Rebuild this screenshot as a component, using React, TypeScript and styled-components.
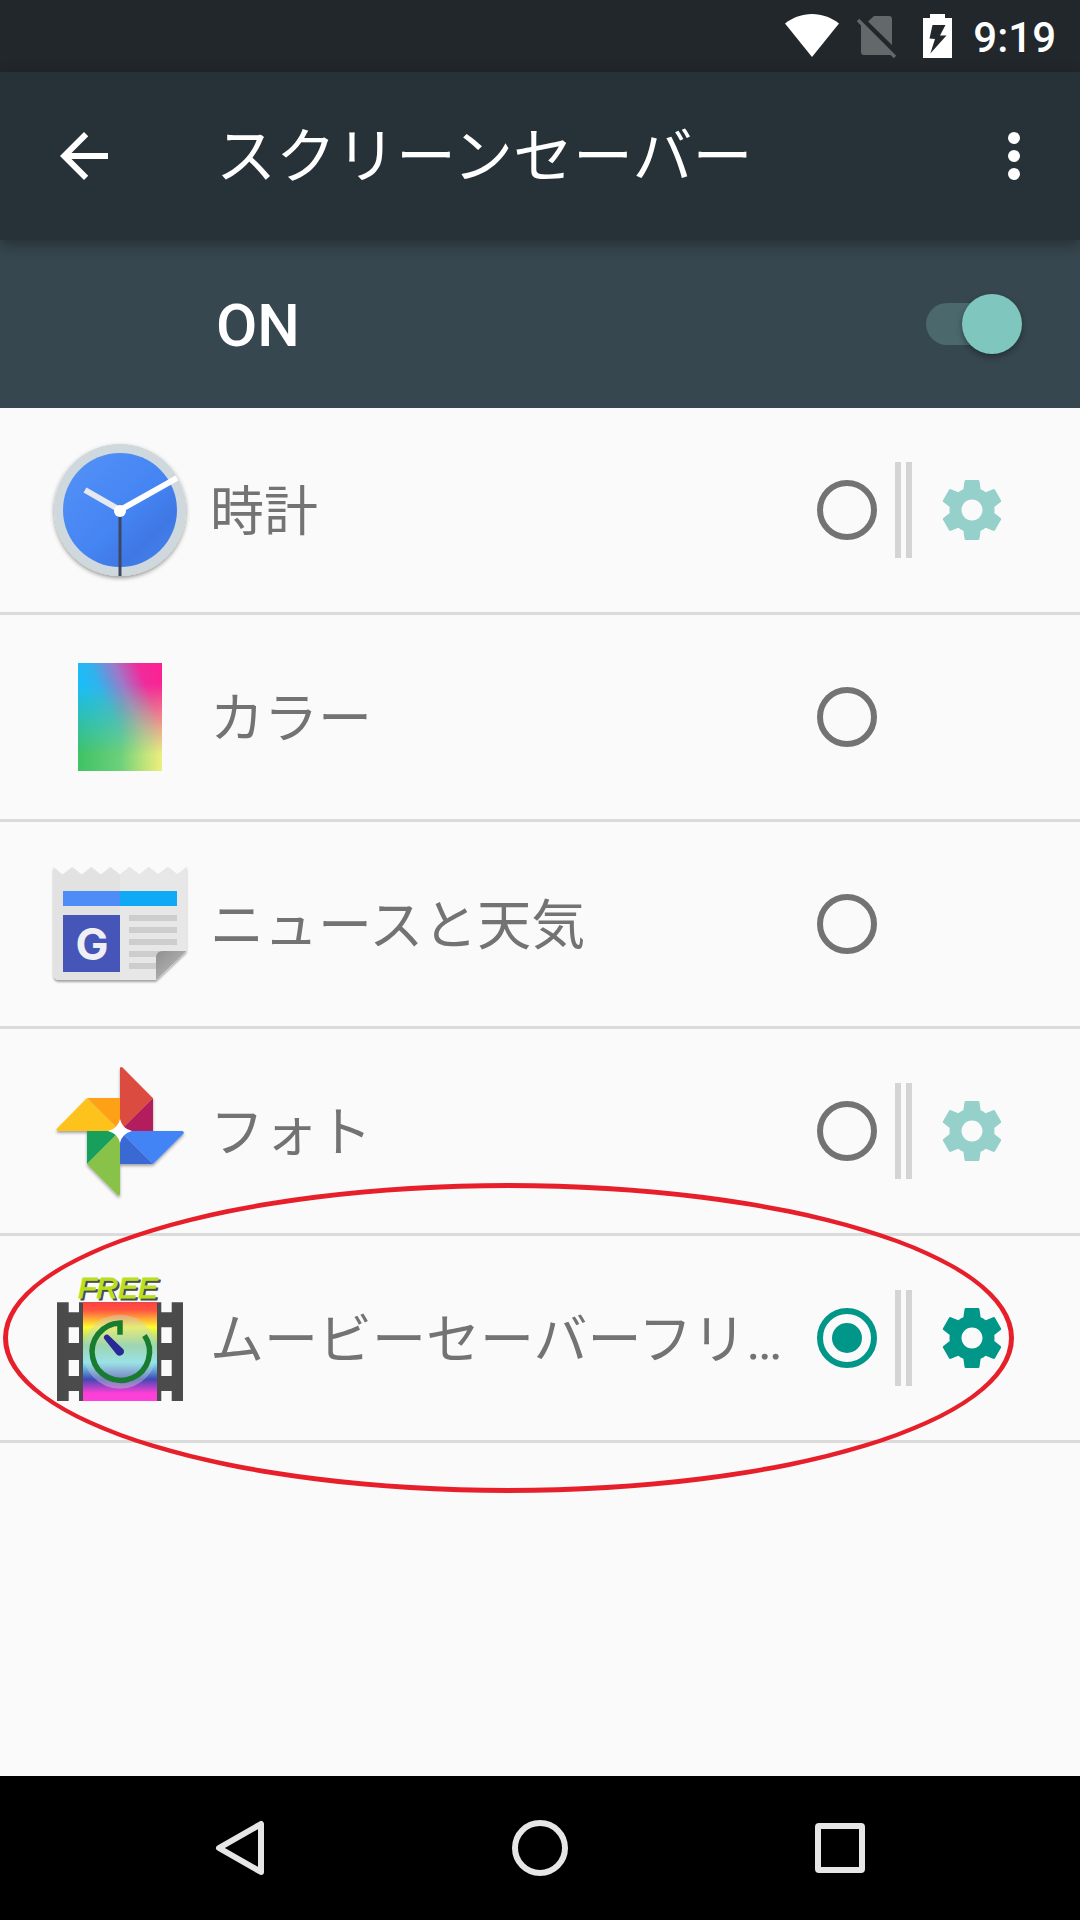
import React, { useState } from "react";
import styled, { createGlobalStyle } from "styled-components";

const GlobalStyle = createGlobalStyle`
  *, *::before, *::after { box-sizing: border-box; }
  body {
    margin: 0;
    background: #fafafa;
    font-family: Roboto, "Noto Sans CJK JP", sans-serif;
  }
`;

const Screen = styled.div`
  display: flex;
  flex-direction: column;
  min-height: 100vh;
`;

const StatusBar = styled.div`
  display: flex;
  align-items: center;
  justify-content: flex-end;
  gap: 18px;
  height: 72px;
  padding-right: 24px;
  background: #21272b;
  color: #fff;
`;

const StatusSlot = styled.span<{ $width: number }>`
  display: flex;
  width: ${(p) => p.$width}px;
`;

const Clock = styled.time`
  padding-top: 4px;
  font-size: 42px;
  font-weight: 500;
  line-height: 48px;
`;

const AppBar = styled.header`
  position: relative;
  display: flex;
  align-items: center;
  gap: 96px;
  height: 168px;
  padding: 0 30px 0 48px;
  background: #263238;
  color: #fff;
  box-shadow: 0 5px 14px rgba(0, 0, 0, 0.32);
`;

const IconButton = styled.button`
  display: flex;
  flex: none;
  padding: 0;
  border: 0;
  background: none;
  color: inherit;
  cursor: pointer;
`;

const Title = styled.h1`
  flex: 1;
  margin: 0;
  padding-top: 4px;
  font-size: 60px;
  font-weight: 400;
  line-height: 72px;
  white-space: nowrap;
`;

const SwitchBar = styled.div`
  display: flex;
  align-items: center;
  justify-content: space-between;
  height: 168px;
  padding: 0 58px 0 216px;
  background: #37474f;
  color: #fff;
`;

const SwitchLabel = styled.label`
  padding-top: 4px;
  font-size: 60px;
  font-weight: 500;
  line-height: 72px;
`;

const Toggle = styled.input`
  position: relative;
  appearance: none;
  width: 96px;
  height: 60px;
  margin: 0;
  cursor: pointer;

  &::before {
    content: "";
    position: absolute;
    inset: 9px 6px 9px 0;
    border-radius: 21px;
    background: #4b696d;
  }

  &::after {
    content: "";
    position: absolute;
    top: 0;
    left: 0;
    width: 60px;
    height: 60px;
    border-radius: 50%;
    background: #b9b9b9;
    box-shadow: 0 3px 6px rgba(0, 0, 0, 0.35);
  }

  &:checked::after {
    left: 36px;
    background: #7fc6bf;
  }
`;

const List = styled.ul`
  flex: 1;
  margin: 0;
  padding: 0;
  list-style: none;
  background: #fafafa;
`;

const Row = styled.li`
  position: relative;
  display: flex;
  align-items: center;
  gap: 18px;
  height: 207px;
  padding-left: 48px;
  border-bottom: 3px solid #dbdbdb;
`;

const RowIcon = styled.svg`
  flex: none;
  width: 144px;
  height: 144px;
`;

const RowLabel = styled.label`
  flex: 1;
  min-width: 0;
  padding-top: 6px;
  overflow: hidden;
  color: #737373;
  font-size: 54px;
  line-height: 78px;
  text-overflow: ellipsis;
  white-space: nowrap;
`;

const Radio = styled.input`
  appearance: none;
  display: grid;
  place-items: center;
  flex: none;
  width: 60px;
  height: 60px;
  margin: 0;
  border: 6px solid #737373;
  border-radius: 50%;
  cursor: pointer;

  &:checked {
    border-color: #009688;
  }

  &:checked::before {
    content: "";
    width: 30px;
    height: 30px;
    border-radius: 50%;
    background: #009688;
  }
`;

const RowActions = styled.div`
  display: flex;
  align-items: center;
  gap: 24px;
  width: 185px;
`;

const Separator = styled.span`
  width: 17px;
  height: 96px;
  border: solid #d4d4d4;
  border-width: 0 6px;
`;

const GearButton = styled(IconButton)<{ $active: boolean }>`
  color: ${(p) => (p.$active ? "#009688" : "#95d1ca")};
`;

const Highlight = styled.span`
  position: absolute;
  inset: -53px 66px -53px 3px;
  border: 5px solid #e71f2a;
  border-radius: 50%;
  pointer-events: none;
`;

const NavBar = styled.nav`
  display: flex;
  height: 144px;
  padding: 0 90px;
  background: #000;
  color: #e6e6e6;
`;

const NavButton = styled(IconButton)`
  flex: 1;
  align-items: center;
  justify-content: center;
`;

const ClockIcon = () => (
  <RowIcon viewBox="0 0 144 144" aria-hidden="true">
    <defs>
      <linearGradient id="clockFace" x1="0" y1="0" x2="1" y2="1">
        <stop offset="0" stopColor="#5593f7" />
        <stop offset="0.55" stopColor="#4484f3" />
        <stop offset="0.75" stopColor="#3f78e4" />
        <stop offset="1" stopColor="#4484f3" />
      </linearGradient>
      <filter id="clockShadow" x="-10%" y="-10%" width="120%" height="125%">
        <feDropShadow dx="0" dy="2" stdDeviation="2" floodOpacity="0.4" />
      </filter>
    </defs>
    <circle cx="72" cy="72" r="66" fill="#cfd8dc" filter="url(#clockShadow)" />
    <circle cx="72" cy="72" r="57" fill="url(#clockFace)" />
    <path d="M72 72V138" stroke="#3f4660" strokeWidth="3" />
    <path d="M72 72L37 52" stroke="#e6e9f0" strokeWidth="6" />
    <path d="M72 72L129 40" stroke="#fff" strokeWidth="6" />
    <circle cx="72" cy="73" r="6" fill="#fff" />
  </RowIcon>
);

const ColorsIcon = () => (
  <RowIcon viewBox="0 0 144 144" aria-hidden="true">
    <defs>
      <linearGradient id="colorsTop" x1="0" y1="0.1" x2="0.95" y2="-0.4">
        <stop offset="0" stopColor="#1cbcf8" />
        <stop offset="0.16" stopColor="#30b2ee" />
        <stop offset="0.4" stopColor="#a077c8" />
        <stop offset="0.62" stopColor="#f02b9b" />
        <stop offset="0.87" stopColor="#ff1f92" />
      </linearGradient>
      <linearGradient id="colorsBottom">
        <stop offset="0" stopColor="#3fc265" />
        <stop offset="0.5" stopColor="#6cd07a" />
        <stop offset="0.8" stopColor="#c0e47a" />
        <stop offset="1" stopColor="#eeee80" />
      </linearGradient>
      <linearGradient id="colorsFade" x1="0" y1="0" x2="0" y2="1">
        <stop offset="0.2" stopColor="#fff" />
        <stop offset="0.5" stopColor="#888" />
        <stop offset="0.85" stopColor="#000" />
      </linearGradient>
      <mask id="colorsMask">
        <rect x="30" y="18" width="84" height="108" fill="url(#colorsFade)" />
      </mask>
    </defs>
    <rect x="30" y="18" width="84" height="108" fill="url(#colorsBottom)" />
    <rect x="30" y="18" width="84" height="108" fill="url(#colorsTop)" mask="url(#colorsMask)" />
  </RowIcon>
);

const NewsIcon = () => (
  <RowIcon viewBox="0 0 144 144" aria-hidden="true">
    <defs>
      <filter id="newsShadow" x="-10%" y="-10%" width="120%" height="125%">
        <feDropShadow dx="0" dy="2" stdDeviation="1" floodOpacity="0.35" />
      </filter>
      <linearGradient id="newsFold" x1="0" y1="0" x2="1" y2="1">
        <stop offset="0" stopColor="#8f8f8f" />
        <stop offset="0.5" stopColor="#a8a8a8" />
      </linearGradient>
    </defs>
    <path
      filter="url(#newsShadow)"
      fill="#e2e2e2"
      d="M5.500 15L14.600 22.500L24.200 15L33.800 22.500L43.300 15L52.900 22.500L62.400 15L72 22.500L81.600 15L91.200 22.500L100.800 15L110.300 22.500L119.900 15L129.400 22.500L138.500 15V99L108 128H11.500Q5.500 128 5.500 122Z"
    />
    <path
      fill="#e7e7e7"
      d="M72 22.500L81.600 15L91.200 22.500L100.800 15L110.300 22.500L119.900 15L129.400 22.500L138.500 15V99L108 128H72Z"
    />
    <path fill="#4f8df6" d="M15 39H72V54H15Z" />
    <path fill="#10a9f5" d="M72 39H129V54H72Z" />
    <path fill="#4556b8" d="M15 63H72V120H15Z" />
    <text x="44" y="108" textAnchor="middle" fill="#f0f0f4" fontFamily="Inter, sans-serif" fontSize="44" fontWeight="700">
      G
    </text>
    <path fill="#cdcdcd" d="M81 63H129V69H81ZM81 75H129V81H81ZM81 87H129V93H81ZM81 99H129V105H81ZM81 111H109V117H81Z" />
    <path fill="url(#newsFold)" d="M138.500 99H115Q108 99 108 106V128Z" />
  </RowIcon>
);

const PhotosIcon = () => (
  <RowIcon viewBox="0 0 144 144" aria-hidden="true">
    <defs>
      <filter id="photosShadow" x="-10%" y="-10%" width="120%" height="125%">
        <feDropShadow dx="0" dy="2" stdDeviation="1.5" floodOpacity="0.35" />
      </filter>
    </defs>
    <g filter="url(#photosShadow)">
      <path fill="#db4c40" d="M72 9Q72.500 7.500 74.500 8.500L105 39.300L72 72Z" />
      <path fill="#b31a5d" d="M105 39.300V72H72Z" />
      <path fill="#fea114" d="M39 39H72V72Z" />
      <path fill="#fdc31b" d="M39 39L8.500 70Q8 72 10 72H72Z" />
      <path fill="#17a05c" d="M39 72H72L39 105Z" />
      <path fill="#89c248" d="M72 72V135.500Q71.500 137.500 69.500 136L39 105Z" />
      <path fill="#3a69d3" d="M72 72V105H105Z" />
      <path fill="#4384f5" d="M72 72H134Q136.500 72.500 135.500 74.500L105 105Z" />
    </g>
    <path fill="#fff" d="M72 60Q74 69.500 84 72Q74 74.500 72 84Q70 74.500 60 72Q70 69.500 72 60Z" />
  </RowIcon>
);

const MovieIcon = () => (
  <RowIcon viewBox="0 0 144 144" aria-hidden="true">
    <defs>
      <linearGradient id="movieRainbow" x1="0" y1="0" x2="0" y2="1">
        <stop offset="0" stopColor="#ff4040" />
        <stop offset="0.08" stopColor="#ff5540" />
        <stop offset="0.25" stopColor="#fffb30" />
        <stop offset="0.44" stopColor="#7fd69a" />
        <stop offset="0.61" stopColor="#7cecf4" />
        <stop offset="0.78" stopColor="#4149b6" />
        <stop offset="0.92" stopColor="#fb3fd6" />
        <stop offset="1" stopColor="#ff40dc" />
      </linearGradient>
    </defs>
    <path fill="#4b4b4b" d="M9 36.300H135V135H9Z" />
    <path fill="url(#movieRainbow)" d="M35 36.300H109V135H35Z" />
    <path
      fill="#fafafa"
      d="M20.700 36H31V46.300H20.700ZM20.700 61.300H31V77H20.700ZM20.700 94H31V110H20.700ZM20.700 125H31V136H20.700ZM113.300 36H123.700V46.300H113.300ZM113.300 61.300H123.700V77H113.300ZM113.300 94H123.700V110H113.300ZM113.300 125H123.700V136H113.300Z"
    />
    <circle cx="72" cy="85.700" r="37" fill="#c6d3d3" fillOpacity="0.42" />
    <path d="M72 68.700V57A28.700 28.700 0 1 0 96.500 69.500" fill="none" stroke="#177c30" strokeWidth="5.500" />
    <path fill="#282896" d="M56.600 73.200A2.700 2.700 0 0 1 60.900 69.600L75.500 83.500A4.300 4.300 0 0 1 68.700 88.500Z" />
    <g fontFamily="Liberation Sans, Arial, sans-serif" fontStyle="italic" fontSize="30" strokeWidth="1" strokeLinejoin="round">
      <text x="32" y="34" fill="#4b4b4b" stroke="#4b4b4b">FREE</text>
      <text x="30" y="32" fill="#b8e01c" stroke="#b8e01c">FREE</text>
    </g>
  </RowIcon>
);

const GearIcon = () => (
  <svg width="72" height="72" viewBox="0 0 24 24" fill="currentColor" aria-hidden="true">
    <path d="M19.430 12.980c.04-.32.07-.64.07-.98s-.03-.66-.07-.98l2.110-1.650c.19-.15.24-.42.12-.64l-2-3.460c-.12-.22-.39-.3-.61-.22l-2.490 1c-.52-.4-1.080-.73-1.690-.98l-.38-2.650C14.460 2.180 14.250 2 14 2h-4c-.25 0-.46.18-.49.42l-.38 2.650c-.61.25-1.170.59-1.690.98l-2.490-1c-.23-.09-.49 0-.61.22l-2 3.460c-.13.22-.07.49.12.64l2.110 1.650c-.04.32-.07.65-.07.98s.03.66.07.98l-2.110 1.650c-.19.15-.24.42-.12.64l2 3.460c.12.22.39.3.61.22l2.490-1c.52.4 1.080.73 1.690.98l.38 2.650c.03.24.24.42.49.42h4c.25 0 .46-.18.49-.42l.38-2.650c.61-.25 1.170-.59 1.690-.98l2.490 1c.23.09.49 0 .61-.22l2-3.460c.12-.22.07-.49-.12-.64l-2.110-1.650zM12 15.500c-1.930 0-3.500-1.570-3.500-3.500s1.570-3.500 3.500-3.500 3.500 1.570 3.500 3.500-1.570 3.500-3.500 3.500z" />
  </svg>
);

const savers = [
  { id: "clock", name: "時計", Icon: ClockIcon, settings: true },
  { id: "colors", name: "カラー", Icon: ColorsIcon, settings: false },
  { id: "news", name: "ニュースと天気", Icon: NewsIcon, settings: false },
  { id: "photos", name: "フォト", Icon: PhotosIcon, settings: true },
  { id: "movie", name: "ムービーセーバーフリー", Icon: MovieIcon, settings: true, highlight: true },
];

export default function App() {
  const [enabled, setEnabled] = useState(true);
  const [selected, setSelected] = useState("movie");

  return (
    <Screen>
      <GlobalStyle />
      <StatusBar>
        <StatusSlot $width={54}>
          <svg width="54" height="44" viewBox="0 0 54 44" aria-hidden="true">
            <path fill="#fff" d="M0 9.500C8 3.500 17 0 27 0S46 3.500 54 9.500L27 43Z" />
          </svg>
        </StatusSlot>
        <StatusSlot $width={48}>
          <svg width="40" height="44" viewBox="0 0 40 44" aria-hidden="true">
            <path fill="#63686b" d="M17 2H32Q35 2 35 5V31L11 7.500ZM4 8V38Q4 41 7 41H36Z" />
            <path stroke="#63686b" strokeWidth="3.500" d="M1 6L38 43" />
          </svg>
        </StatusSlot>
        <StatusSlot $width={32}>
          <svg width="29" height="44" viewBox="0 0 29 44" aria-hidden="true">
            <path fill="#fff" d="M7 0H22V4H29V44H0V4H7Z" />
            <path fill="#21272b" d="M9.500 11H22.500L17 21.500H23.500L7.300 39.500L12 25L6.500 24.500Z" />
          </svg>
        </StatusSlot>
        <Clock>9:19</Clock>
      </StatusBar>

      <AppBar>
        <IconButton type="button" aria-label="戻る">
          <svg width="72" height="72" viewBox="0 0 24 24" fill="currentColor" aria-hidden="true">
            <path d="M20 11H7.830l5.590-5.590L12 4l-8 8 8 8 1.410-1.410L7.830 13H20v-2z" />
          </svg>
        </IconButton>
        <Title>スクリーンセーバー</Title>
        <IconButton type="button" aria-label="その他">
          <svg width="72" height="72" viewBox="0 0 24 24" fill="currentColor" aria-hidden="true">
            <circle cx="12" cy="6" r="2" />
            <circle cx="12" cy="12" r="2" />
            <circle cx="12" cy="18" r="2" />
          </svg>
        </IconButton>
      </AppBar>

      <SwitchBar>
        <SwitchLabel htmlFor="saver-enabled">{enabled ? "ON" : "OFF"}</SwitchLabel>
        <Toggle
          id="saver-enabled"
          type="checkbox"
          role="switch"
          checked={enabled}
          onChange={(e) => setEnabled(e.target.checked)}
        />
      </SwitchBar>

      <List>
        {savers.map(({ id, name, Icon, settings, highlight }) => (
          <Row key={id}>
            <Icon />
            <RowLabel htmlFor={`saver-${id}`}>{name}</RowLabel>
            <Radio
              id={`saver-${id}`}
              type="radio"
              name="saver"
              checked={selected === id}
              onChange={() => setSelected(id)}
            />
            <RowActions>
              {settings && (
                <>
                  <Separator />
                  <GearButton type="button" aria-label={`${name}の設定`} $active={selected === id}>
                    <GearIcon />
                  </GearButton>
                </>
              )}
            </RowActions>
            {highlight && <Highlight />}
          </Row>
        ))}
      </List>

      <NavBar>
        <NavButton type="button" aria-label="戻る">
          <svg width="60" height="60" viewBox="0 0 60 60" fill="none" stroke="currentColor" aria-hidden="true">
            <path strokeWidth="6" strokeLinejoin="round" d="M51 6V54L9 30Z" />
          </svg>
        </NavButton>
        <NavButton type="button" aria-label="ホーム">
          <svg width="60" height="60" viewBox="0 0 60 60" fill="none" stroke="currentColor" aria-hidden="true">
            <circle cx="30" cy="30" r="25" strokeWidth="6" />
          </svg>
        </NavButton>
        <NavButton type="button" aria-label="最近使ったアプリ">
          <svg width="60" height="60" viewBox="0 0 60 60" fill="none" stroke="currentColor" aria-hidden="true">
            <rect x="8" y="8" width="44" height="44" rx="1" strokeWidth="6" />
          </svg>
        </NavButton>
      </NavBar>
    </Screen>
  );
}
